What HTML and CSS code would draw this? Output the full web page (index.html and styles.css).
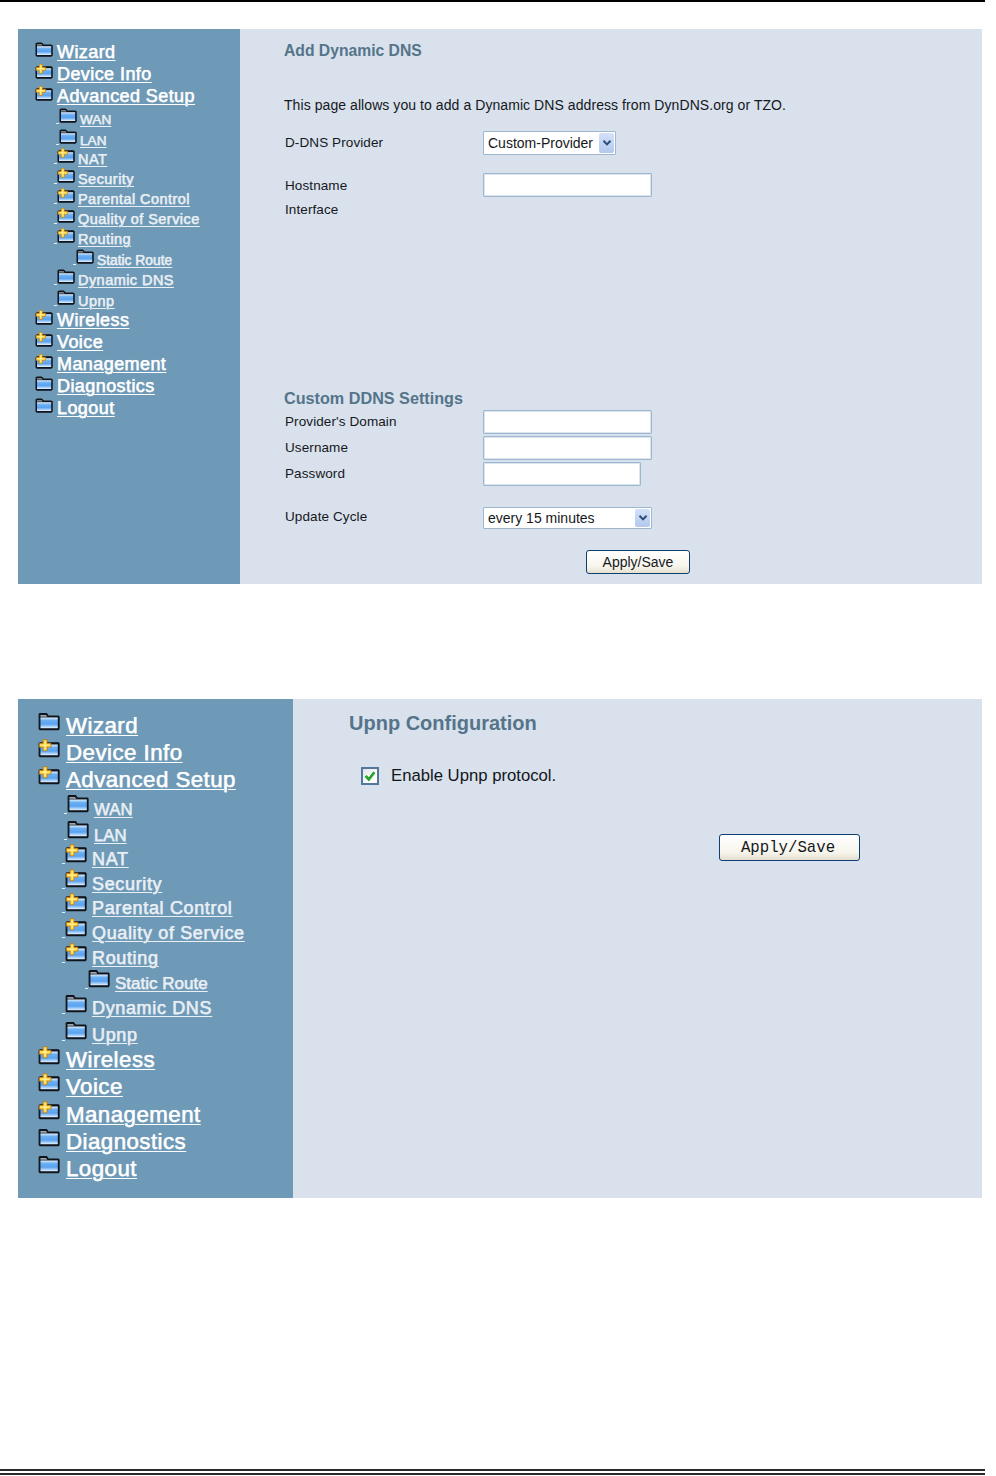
FILE: index.html
```html
<!DOCTYPE html>
<html lang="en">
<head>
<meta charset="utf-8">
<title>Dynamic DNS and Upnp</title>
<link rel="stylesheet" href="styles.css">
</head>
<body>
<svg class="defs" width="0" height="0" aria-hidden="true">
  <defs>
    <linearGradient id="fill" x1="0" y1="0" x2="0" y2="1">
      <stop offset="0" stop-color="#e2effc"/>
      <stop offset=".28" stop-color="#6cb0f4"/>
      <stop offset=".62" stop-color="#5aa2f0"/>
      <stop offset="1" stop-color="#e4f2ff"/>
    </linearGradient>
    <symbol id="folder" viewBox="0 0 18 15">
      <path d="M1 13.5V1.6L1.6 1H7L8.4 3H16.6L17.2 3.6V13.5L16.6 14.2H1.6Z" fill="#10151c" stroke="#10151c" stroke-width="1"/>
      <path d="M2 2.2H6.6L7.6 3.6H2Z" fill="#9aa7b3"/>
      <rect x="2" y="4.2" width="14.2" height="8.8" fill="url(#fill)"/>
    </symbol>
    <symbol id="folder-plus" viewBox="0 0 18 15">
      <path d="M1 13.5V3.4L1.6 2.8H16.6L17.2 3.4V13.5L16.6 14.2H1.6Z" fill="#10151c" stroke="#10151c" stroke-width="1"/>
      <rect x="2" y="4.2" width="14.2" height="8.8" fill="url(#fill)"/>
      <path d="M4.2 .3H7.4V3.2H10.6V6.4H7.4V9.4H4.2V6.4H1.1V3.2H4.2Z" fill="#fbd033" stroke="#b9761a" stroke-width=".6"/>
      <path d="M5.8 1.2V8.4M2 4.8H9.6" stroke="#fff6b4" stroke-width=".8"/>
    </symbol>
  </defs>
</svg>

<div class="rule-top"></div>

<section class="panel panel-ddns">
  <nav class="tree tree-small">
    <div class="node top"><svg class="ico"><use href="#folder"/></svg><a href="#">Wizard</a></div>
    <div class="node top"><svg class="ico"><use href="#folder-plus"/></svg><a href="#">Device Info</a></div>
    <div class="node top"><svg class="ico"><use href="#folder-plus"/></svg><a href="#">Advanced Setup</a></div>
    <div class="node sub far"><i class="dash"></i><svg class="ico"><use href="#folder"/></svg><a href="#">WAN</a></div>
    <div class="node sub far"><i class="dash"></i><svg class="ico"><use href="#folder"/></svg><a href="#">LAN</a></div>
    <div class="node sub"><i class="dash"></i><svg class="ico"><use href="#folder-plus"/></svg><a href="#">NAT</a></div>
    <div class="node sub"><i class="dash"></i><svg class="ico"><use href="#folder-plus"/></svg><a href="#">Security</a></div>
    <div class="node sub"><i class="dash"></i><svg class="ico"><use href="#folder-plus"/></svg><a href="#">Parental Control</a></div>
    <div class="node sub"><i class="dash"></i><svg class="ico"><use href="#folder-plus"/></svg><a href="#">Quality of Service</a></div>
    <div class="node sub"><i class="dash"></i><svg class="ico"><use href="#folder-plus"/></svg><a href="#">Routing</a></div>
    <div class="node subsub"><i class="dash"></i><svg class="ico"><use href="#folder"/></svg><a href="#">Static Route</a></div>
    <div class="node sub"><i class="dash"></i><svg class="ico"><use href="#folder"/></svg><a href="#">Dynamic DNS</a></div>
    <div class="node sub"><i class="dash"></i><svg class="ico"><use href="#folder"/></svg><a href="#">Upnp</a></div>
    <div class="node top"><svg class="ico"><use href="#folder-plus"/></svg><a href="#">Wireless</a></div>
    <div class="node top"><svg class="ico"><use href="#folder-plus"/></svg><a href="#">Voice</a></div>
    <div class="node top"><svg class="ico"><use href="#folder-plus"/></svg><a href="#">Management</a></div>
    <div class="node top"><svg class="ico"><use href="#folder"/></svg><a href="#">Diagnostics</a></div>
    <div class="node top"><svg class="ico"><use href="#folder"/></svg><a href="#">Logout</a></div>
  </nav>
  <main class="body">
    <h2 class="title">Add Dynamic DNS</h2>
    <p class="intro">This page allows you to add a Dynamic DNS address from DynDNS.org or TZO.</p>
    <div class="form form-top">
      <label>D-DNS Provider</label>
      <div class="pick pick-provider"><select><option>Custom-Provider</option></select><span class="arrow"><svg viewBox="0 0 10 8"><path d="M1.5 1.8 5 5.4 8.5 1.8" fill="none" stroke="#2c4a78" stroke-width="2"/></svg></span></div>
      <label class="gap-host">Hostname</label>
      <input class="field gap-host" type="text">
      <label class="label-iface">Interface</label>
    </div>
    <h3 class="subtitle">Custom DDNS Settings</h3>
    <div class="form form-custom">
      <label>Provider's Domain</label><input class="field" type="text">
      <label>Username</label><input class="field" type="text">
      <label>Password</label><input class="field field-short" type="password">
      <label class="gap-cycle">Update Cycle</label>
      <div class="pick pick-cycle"><select><option>every 15 minutes</option></select><span class="arrow"><svg viewBox="0 0 10 8"><path d="M1.5 1.8 5 5.4 8.5 1.8" fill="none" stroke="#2c4a78" stroke-width="2"/></svg></span></div>
    </div>
    <div class="actions"><button class="btn" type="button">Apply/Save</button></div>
  </main>
</section>

<section class="panel panel-upnp">
  <nav class="tree tree-large">
    <div class="node top"><svg class="ico"><use href="#folder"/></svg><a href="#">Wizard</a></div>
    <div class="node top"><svg class="ico"><use href="#folder-plus"/></svg><a href="#">Device Info</a></div>
    <div class="node top"><svg class="ico"><use href="#folder-plus"/></svg><a href="#">Advanced Setup</a></div>
    <div class="node sub far"><i class="dash"></i><svg class="ico"><use href="#folder"/></svg><a href="#">WAN</a></div>
    <div class="node sub far"><i class="dash"></i><svg class="ico"><use href="#folder"/></svg><a href="#">LAN</a></div>
    <div class="node sub"><i class="dash"></i><svg class="ico"><use href="#folder-plus"/></svg><a href="#">NAT</a></div>
    <div class="node sub"><i class="dash"></i><svg class="ico"><use href="#folder-plus"/></svg><a href="#">Security</a></div>
    <div class="node sub"><i class="dash"></i><svg class="ico"><use href="#folder-plus"/></svg><a href="#">Parental Control</a></div>
    <div class="node sub"><i class="dash"></i><svg class="ico"><use href="#folder-plus"/></svg><a href="#">Quality of Service</a></div>
    <div class="node sub"><i class="dash"></i><svg class="ico"><use href="#folder-plus"/></svg><a href="#">Routing</a></div>
    <div class="node subsub"><i class="dash"></i><svg class="ico"><use href="#folder"/></svg><a href="#">Static Route</a></div>
    <div class="node sub"><i class="dash"></i><svg class="ico"><use href="#folder"/></svg><a href="#">Dynamic DNS</a></div>
    <div class="node sub"><i class="dash"></i><svg class="ico"><use href="#folder"/></svg><a href="#">Upnp</a></div>
    <div class="node top"><svg class="ico"><use href="#folder-plus"/></svg><a href="#">Wireless</a></div>
    <div class="node top"><svg class="ico"><use href="#folder-plus"/></svg><a href="#">Voice</a></div>
    <div class="node top"><svg class="ico"><use href="#folder-plus"/></svg><a href="#">Management</a></div>
    <div class="node top"><svg class="ico"><use href="#folder"/></svg><a href="#">Diagnostics</a></div>
    <div class="node top"><svg class="ico"><use href="#folder"/></svg><a href="#">Logout</a></div>
  </nav>
  <main class="body">
    <h2 class="title">Upnp Configuration</h2>
    <div class="check-row">
      <span class="check"><svg viewBox="0 0 14 14"><path d="M2.6 6.8 5.8 10.4 11.4 3.2" fill="none" stroke="#22a32a" stroke-width="2.6"/></svg></span>
      <span>Enable Upnp protocol.</span>
    </div>
    <div class="actions"><button class="btn" type="button">Apply/Save</button></div>
  </main>
</section>

<div class="rule-bottom"></div>
</body>
</html>
```

FILE: styles.css
```css
* { box-sizing: border-box; }
html, body { margin: 0; padding: 0; background: #fff; }
body { font-family: "Liberation Sans", Arial, sans-serif; color: #16181c; width: 996px; }
.defs { position: absolute; }

.rule-top { width: 985px; height: 2px; background: #000; }
.rule-bottom { width: 985px; height: 6px; margin-top: 271px; border-top: 2px solid #2a2a2a; border-bottom: 2px solid #2a2a2a; }

.panel { display: flex; margin-left: 18px; width: 964px; background: #d8e1ec; }
.panel-ddns { margin-top: 27px; height: 555px; }
.panel-upnp { margin-top: 115px; height: 499px; }

.tree { flex: none; display: grid; background: #6f9ab7; align-content: start; }
.tree-small {
  width: 222px; padding: 12px 0 0 17px;
  grid-template-rows: 22px 22px 23px 21px 19px 20px 20px 20px 20px 21px 20px 21px 19px 22px 22px 22px 22px 22px;
}
.tree-large {
  width: 275px; padding: 12px 0 0 20px;
  grid-template-rows: 27px 27px 29px 26px 24px 25px 24px 25px 25px 26px 25px 27px 24px 27px 28px 27px 27px 27px;
}

.node { display: flex; align-items: flex-start; white-space: nowrap; }
.node a { color: #fff; text-underline-offset: 2px; text-decoration-thickness: 1px; -webkit-text-stroke: .25px currentColor; text-shadow: 0 0 1px rgba(255,255,255,.4); }
.node.sub a, .node.subsub a { color: #e8eff5; }
.ico { display: block; flex: none; }
.dash { display: block; flex: none; height: 1px; background: #e8eff5; }

.tree-small .node { line-height: 22px; font-size: 18px; letter-spacing: .42px; }
.tree-small .ico { width: 18px; height: 15px; margin: 1px 4px 0 0; }
.tree-small .node.sub { font-size: 14.5px; letter-spacing: .45px; padding-left: 19px; }
.tree-small .node.sub.far { font-size: 13.6px; letter-spacing: 0; padding-left: 21px; }
.tree-small .node.far a, .tree-small .node.subsub a { margin-top: 1px; }
.tree-small .node.subsub { font-size: 13.8px; letter-spacing: 0; padding-left: 38px; }
.tree-small .dash { width: 3px; margin-top: 15px; }
.tree-small .sub .ico, .tree-small .subsub .ico { width: 18px; margin-right: 3px; margin-top: 0; }

.tree-large .node { line-height: 27px; font-size: 22.3px; letter-spacing: .45px; }
.tree-large .node a { margin-top: 1px; }
.tree-large .node.sub a { margin-top: 2px; }
.tree-large .node:nth-child(n+12):nth-child(-n+13) a { margin-top: 1px; }
.tree-large .ico { width: 22px; height: 19px; margin: 1px 6px 0 0; }
.tree-large .node.sub { font-size: 18px; letter-spacing: .65px; padding-left: 24px; }
.tree-large .node.sub.far { font-size: 16.8px; letter-spacing: 0; padding-left: 26px; }
.tree-large .node.subsub { font-size: 17px; letter-spacing: 0; padding-left: 47px; }
.tree-large .dash { width: 3px; margin-top: 19px; }
.tree-large .sub .ico, .tree-large .subsub .ico { margin-right: 5px; margin-top: 0; }

.body { flex: 1; min-width: 0; }
.title { margin: 0; font-weight: 700; color: #55748a; }
label { display: block; }

.panel-ddns .body { padding: 12px 0 0 44px; font-size: 14px; }
.panel-ddns .title { font-size: 15.7px; line-height: 20px; }
.intro { margin: 34px 0 0; font-size: 14px; line-height: 20px; letter-spacing: .07px; }

.form { display: grid; grid-template-columns: 198px 1fr; padding-left: 1px; align-items: start; justify-items: start; font-size: 13.5px; letter-spacing: .1px; }
.form label { line-height: 18px; padding-top: 3px; }
.form-top { margin-top: 16px; }
.form .field.gap-host { margin-top: 18px; }
.form label.gap-host { margin-top: 19px; }
.form .label-iface { grid-column: 1 / 3; margin-top: 1px; }

.subtitle { margin: 169px 0 0; font-size: 16.2px; line-height: 20px; font-weight: 700; color: #55748a; }
.form-custom { row-gap: 2px; margin-top: 2px; }
.form label.gap-cycle { margin-top: 17px; }
.pick-cycle { margin-top: 19px; }

.field { display: block; width: 169px; height: 24px; margin: 0; padding: 0 3px; background: #fff; border: 1px solid #9fb6cf; border-radius: 1px; box-shadow: inset 0 0 0 1px #dbe5f0; }
.field-short { width: 158px; }

.pick { position: relative; display: block; }
.pick select { display: block; width: 100%; height: 100%; margin: 0; padding: 0 0 0 4px; appearance: none; background: #fff; border: 1px solid #9fb6cf; border-radius: 1px; font: 14px "Liberation Sans", Arial, sans-serif; color: #16181c; }
.pick-provider { width: 133px; height: 24px; }
.pick-cycle { width: 169px; height: 22px; }
.arrow { position: absolute; right: 2px; top: 2px; bottom: 2px; width: 15px; display: flex; align-items: center; justify-content: center; background: linear-gradient(#d4e1f8, #b3c8ee); border-radius: 2px; }
.arrow svg { width: 10px; height: 8px; display: block; }

.panel-ddns .actions { margin: 21px 0 0 302px; }
.btn { display: block; margin: 0; padding: 0; background: linear-gradient(#fff, #f7f5ec 70%, #e4dfcf); border: 1px solid #0e3f70; border-radius: 3px; color: #16181c; }
.panel-ddns .btn { width: 104px; height: 24px; font: 14px "Liberation Sans", Arial, sans-serif; }

.panel-upnp .body { padding: 12px 0 0 56px; }
.panel-upnp .title { font-size: 20px; line-height: 24px; }
.check-row { display: flex; align-items: center; gap: 12px; margin: 29px 0 0 12px; height: 24px; font-size: 16.7px; color: #14161a; }
.check { flex: none; display: block; width: 18px; height: 18px; background: linear-gradient(135deg, #dfe3e8, #fff 70%); border: 2px solid #55779c; }
.check svg { display: block; width: 14px; height: 14px; }
.panel-upnp .actions { margin: 46px 0 0 370px; }
.panel-upnp .btn { width: 141px; height: 27px; padding-right: 3px; font: 15.7px "Liberation Mono", monospace; }
```
